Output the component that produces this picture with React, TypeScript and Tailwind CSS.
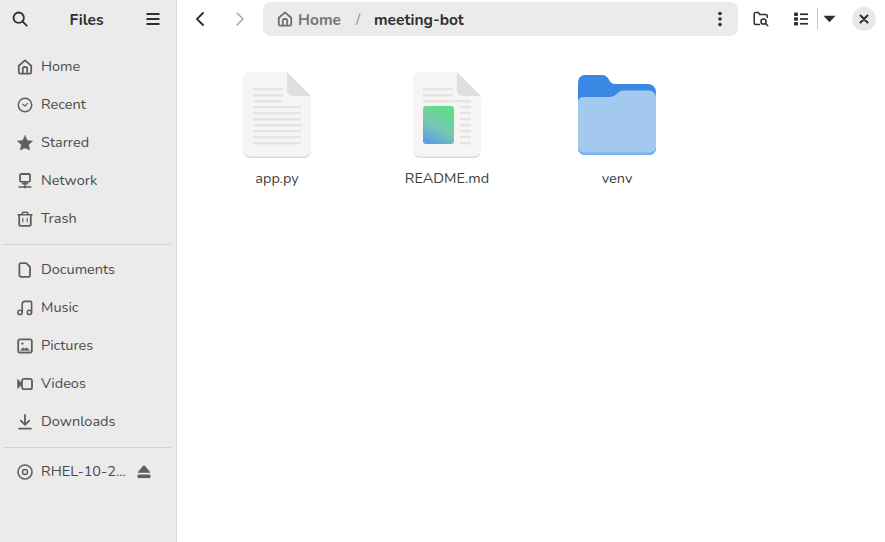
import type { ReactNode } from 'react';

const G = ({ children, className = 'text-[#5f5f5f]' }: { children: ReactNode; className?: string }) => (
  <svg viewBox="0 0 16 16" className={`w-4 h-4 shrink-0 ${className}`} fill="none" stroke="currentColor" strokeWidth="1.8" strokeLinecap="round" strokeLinejoin="round">
    {children}
  </svg>
);

const HomeIcon = ({ className }: { className?: string }) => (
  <G className={className}>
    <path d="M1.800 6.800 8 1.400l6.200 5.400v6.400a1.400 1.400 0 0 1-1.400 1.400H3.200a1.400 1.400 0 0 1-1.400-1.400z" />
    <path d="M5.800 14.400V9.600a1.600 1.600 0 0 1 1.600-1.600h1.200a1.600 1.600 0 0 1 1.600 1.600v4.800" />
  </G>
);

const places = [
  {
    name: 'Home',
    icon: <HomeIcon />,
  },
  {
    name: 'Recent',
    icon: (
      <G>
        <circle cx="8" cy="8" r="6.700" strokeWidth="1.500" />
        <path d="M5.600 7.200 8 9l2.600-2.600" strokeWidth="1.100" />
      </G>
    ),
  },
  {
    name: 'Starred',
    icon: (
      <G>
        <path d="M8 .4l2.300 5 5.300.6-3.900 3.700 1 5.400L8 12.900 3.300 15.100l1-5.400L.4 6l5.300-.6z" fill="currentColor" strokeWidth="0.400" />
      </G>
    ),
  },
  {
    name: 'Network',
    icon: (
      <G>
        <rect x="3" y="1" width="10" height="7.800" rx="1.200" />
        <path d="M5.500 10.800h5M8 9.500v4M2 14h12" strokeWidth="1.400" />
        <circle cx="8" cy="14" r="1.300" fill="currentColor" stroke="none" />
      </G>
    ),
  },
  {
    name: 'Trash',
    icon: (
      <G>
        <path d="M1 3.800h14M5.200 3.600V2.400a1.200 1.200 0 0 1 1.200-1.200h3.200a1.200 1.200 0 0 1 1.200 1.200v1.200" strokeWidth="1.500" />
        <path d="M2.200 3.800v9.400a1.600 1.600 0 0 0 1.600 1.600h8.400a1.600 1.600 0 0 0 1.600-1.600V3.800" />
        <path d="M5.800 7.400v3.600M10.200 7.400v3.600" strokeWidth="1.100" />
      </G>
    ),
  },
];

const folders = [
  {
    name: 'Documents',
    icon: (
      <G>
        <path d="M4 1.200h5.200l3.800 3.800v8.200a1.600 1.600 0 0 1-1.600 1.600H4a1.600 1.600 0 0 1-1.600-1.600V2.800A1.600 1.600 0 0 1 4 1.200z" />
      </G>
    ),
  },
  {
    name: 'Music',
    icon: (
      <G>
        <circle cx="3" cy="12.400" r="2.100" strokeWidth="1.600" />
        <circle cx="12.400" cy="12.400" r="2.100" strokeWidth="1.600" />
        <path d="M5.200 12.200V4.200a2.800 2.800 0 0 1 2.800-2.800h5.600a1 1 0 0 1 1 1v9.800" strokeWidth="1.600" />
      </G>
    ),
  },
  {
    name: 'Pictures',
    icon: (
      <G>
        <rect x="1.200" y="1.400" width="13.600" height="13.200" rx="1.800" />
        <circle cx="5.400" cy="5.600" r="1.200" fill="currentColor" stroke="none" />
        <path d="M3.200 12.600l3-3 1.600 1.500 1.600-1.700 3.400 3.200z" fill="currentColor" strokeWidth="0.400" />
      </G>
    ),
  },
  {
    name: 'Videos',
    icon: (
      <G>
        <rect x="5" y="2.800" width="10" height="10.400" rx="2" />
        <path d="M.6 3.600v8.800L4.400 8.900V7.100z" fill="currentColor" strokeWidth="0.600" />
      </G>
    ),
  },
  {
    name: 'Downloads',
    icon: (
      <G>
        <path d="M8 1v9.400M3.800 6.600 8 10.800l4.200-4.200M2 14.600h12" />
      </G>
    ),
  },
];

const Row = ({ name, icon, children }: { name: string; icon: ReactNode; children?: ReactNode }) => (
  <div className="flex items-center h-[38px] pl-[17px] pr-[25px]">
    {icon}
    <span className="ml-2 flex-1 text-[#4a4a4a]">{name}</span>
    {children}
  </div>
);

const PlainDoc = () => (
  <svg viewBox="0 0 68 86" className="w-[68px] h-[86px]">
    <path d="M6 0h38l24 26v53a6 6 0 0 1-6 6H6a6 6 0 0 1-6-6V6a6 6 0 0 1 6-6z" fill="#f6f5f4" />
    <path d="M0.500 79v1a6 6 0 0 0 6 6h55a6 6 0 0 0 6-6v-1a6 6 0 0 1-6 5.400H6.500a6 6 0 0 1-6-5.400z" fill="#dedddb" />
    <path d="M44 0l24 24H50a6 6 0 0 1-6-6z" fill="#e0dfdd" />
    {[16, 22, 28].map((y) => (
      <rect key={y} x="10" y={y} width="30" height="2.400" fill="#e5e4e2" />
    ))}
    {[34, 40, 46, 52, 58, 64, 70].map((y) => (
      <rect key={y} x="10" y={y} width="48" height="2.400" fill="#e5e4e2" />
    ))}
  </svg>
);

const ReadmeDoc = () => (
  <svg viewBox="0 0 68 86" className="w-[68px] h-[86px]">
    <defs>
      <linearGradient id="md" x1="0.700" y1="0.100" x2="0.250" y2="1">
        <stop offset="0" stopColor="#5fdc8d" />
        <stop offset="0.500" stopColor="#78c8b0" />
        <stop offset="1" stopColor="#5a9fe3" />
      </linearGradient>
    </defs>
    <path d="M6 0h38l24 26v53a6 6 0 0 1-6 6H6a6 6 0 0 1-6-6V6a6 6 0 0 1 6-6z" fill="#f6f5f4" />
    <path d="M0.500 79v1a6 6 0 0 0 6 6h55a6 6 0 0 0 6-6v-1a6 6 0 0 1-6 5.400H6.500a6 6 0 0 1-6-5.400z" fill="#dedddb" />
    <path d="M44 0l24 24H50a6 6 0 0 1-6-6z" fill="#e0dfdd" />
    {[16, 22].map((y) => (
      <rect key={y} x="10" y={y} width="30" height="2.400" fill="#e5e4e2" />
    ))}
    <rect x="10" y="28" width="48" height="2.400" fill="#e5e4e2" />
    {[34, 40, 46, 52, 58, 64, 70].map((y) => (
      <rect key={y} x="47" y={y} width="11" height="2.400" fill="#e5e4e2" />
    ))}
    <rect x="10" y="34" width="31" height="38" rx="3" fill="url(#md)" />
  </svg>
);

const FolderIcon = () => (
  <svg viewBox="0 0 78 80" className="w-[78px] h-[80px] mt-[3px]">
    <path d="M7 0h17c3 0 5 1.500 6.500 4 2 3.500 3.500 5 6.500 5h33a8 8 0 0 1 8 8v56a7 7 0 0 1-7 7H7a7 7 0 0 1-7-7V7a7 7 0 0 1 7-7z" fill="#3b87e4" />
    <rect x="0" y="50" width="78" height="30" rx="7" fill="#7dafe8" />
    <path d="M0 27a5 5 0 0 1 5-5h26c4 0 6-1.500 8-3.500 2-2 3.500-3 6.500-3H71a7 7 0 0 1 7 7v49a6 6 0 0 1-6 6H6a6 6 0 0 1-6-6z" fill="#a4c9ef" />
  </svg>
);

const files = [
  { name: 'app.py', icon: <PlainDoc /> },
  { name: 'README.md', icon: <ReadmeDoc /> },
  { name: 'venv', icon: <FolderIcon /> },
];

const Dark = ({ children }: { children: ReactNode }) => (
  <svg viewBox="0 0 16 16" className="w-4 h-4 text-[#2e2e2e]" fill="none" stroke="currentColor" strokeWidth="1.800" strokeLinecap="round" strokeLinejoin="round">
    {children}
  </svg>
);

const App = () => {
  return (
    <div className="flex h-[542px] w-[885px] overflow-hidden bg-white text-[14.5px] font-['Nunito','Open_Sans',sans-serif]">
      <aside className="w-[177px] shrink-0 bg-[#ebebeb] border-r border-[#d6d6d6]">
        <div className="flex items-center justify-between h-[38px] pl-3 pr-[15px]">
          <Dark>
            <circle cx="6.700" cy="6.700" r="5.200" />
            <path d="m10.700 10.700 4 4" />
          </Dark>
          <span className="font-bold text-[15.5px] text-[#2e2e2e] translate-y-px">Files</span>
          <Dark>
            <path d="M1.500 3h13M1.500 8h13M1.500 13h13" strokeLinecap="butt" />
          </Dark>
        </div>

        <nav className="pt-[10px]">
          {places.map((p) => (
            <Row key={p.name} name={p.name} icon={p.icon} />
          ))}
        </nav>
        <div className="ml-[3px] mr-[5px] mt-[6px] mb-[6px] h-px bg-[#d2d2d2]" />
        <nav>
          {folders.map((p) => (
            <Row key={p.name} name={p.name} icon={p.icon} />
          ))}
        </nav>
        <div className="ml-[3px] mr-[5px] mt-[6px] mb-[5px] h-px bg-[#d2d2d2]" />
        <Row
          name="RHEL-10-2..."
          icon={
            <G>
              <circle cx="8" cy="8" r="7" strokeWidth="1.600" />
              <circle cx="8" cy="8" r="2.500" strokeWidth="1.400" />
            </G>
          }
        >
          <svg viewBox="0 0 14 14" className="w-[14px] h-[14px] text-[#5f5f5f]" fill="currentColor">
            <path d="M7 .5c.5 0 1 .3 1.400.8L13 7a.5.5 0 0 1-.4.8H1.400A.5.5 0 0 1 1 7L5.600 1.300C6 .8 6.500.5 7 .5z" />
            <rect x="0.500" y="9.500" width="13" height="3.500" rx="1.200" />
          </svg>
        </Row>
      </aside>

      <main className="flex-1 min-w-0">
        <header className="flex items-center h-[38px] pl-[15px] pr-[9px]">
          <button className="w-4 flex justify-center">
            <Dark>
              <path d="M11 2 5 8l6 6" />
            </Dark>
          </button>
          <button className="w-4 ml-6 flex justify-center">
            <svg viewBox="0 0 16 16" className="w-4 h-4" fill="none" stroke="#a8a8a8" strokeWidth="1.500" strokeLinecap="round" strokeLinejoin="round">
              <path d="m5 2 6 6-6 6" />
            </svg>
          </button>
          <div className="ml-[15px] flex items-center w-[475px] h-[34px] rounded-lg bg-[#ebebeb] pl-[14px] pr-[10px]">
            <HomeIcon className="text-[#6f6f6f]" />
            <span className="ml-[5px] font-bold text-[15.5px] text-[#757575] translate-y-px">Home</span>
            <span className="ml-[15px] text-[#8a8a8a] translate-y-px">/</span>
            <span className="ml-[14px] font-bold text-[15.5px] text-[#2e2e2e] translate-y-px">meeting-bot</span>
            <span className="ml-auto">
              <svg viewBox="0 0 16 16" className="w-4 h-4 text-[#2e2e2e]" fill="currentColor">
                <circle cx="8" cy="2.500" r="1.800" />
                <circle cx="8" cy="8" r="1.800" />
                <circle cx="8" cy="13.500" r="1.800" />
              </svg>
            </span>
          </div>
          <span className="ml-[15px]">
            <Dark>
              <path d="M6.500 13.500H3A1.800 1.800 0 0 1 1.200 11.700V3A1.500 1.500 0 0 1 2.700 1.500h2.600l1.500 2h6A1.500 1.500 0 0 1 14.300 5v1.500" strokeWidth="1.500" />
              <circle cx="10.500" cy="10.500" r="2.600" strokeWidth="1.500" />
              <path d="m12.500 12.500 2.300 2.300" strokeWidth="1.500" />
            </Dark>
          </span>
          <span className="ml-6">
            <svg viewBox="0 0 16 16" className="w-4 h-4 text-[#2e2e2e]" fill="currentColor">
              <rect x="1" y="1.500" width="4" height="3.500" rx="1" />
              <rect x="1" y="6.250" width="4" height="3.500" rx="1" />
              <rect x="1" y="11" width="4" height="3.500" rx="1" />
              <rect x="7" y="2.400" width="8" height="1.700" />
              <rect x="7" y="7.150" width="8" height="1.700" />
              <rect x="7" y="11.900" width="8" height="1.700" />
            </svg>
          </span>
          <span className="ml-2 h-[22px] w-px bg-[#c8c8c8]" />
          <svg viewBox="0 0 14 8" className="ml-[5px] w-[13px] h-[8px] text-[#2e2e2e]" fill="currentColor">
            <path d="M.5.5h13L7 7.500z" />
          </svg>
          <button className="ml-[16px] w-6 h-6 rounded-full bg-[#e8e8e8] flex items-center justify-center">
            <svg viewBox="0 0 10 10" className="w-[10px] h-[10px]" fill="none" stroke="#2e2e2e" strokeWidth="2" strokeLinecap="round">
              <path d="m1.500 1.500 7 7M8.500 1.500l-7 7" />
            </svg>
          </button>
        </header>

        <section className="flex pl-[15px] pt-[34px]">
          {files.map((f) => (
            <div key={f.name} className="w-[170px] flex flex-col items-center">
              <div className="h-[86px] flex items-start justify-center">{f.icon}</div>
              <span className="mt-[10px] text-[#3d3d3d]">{f.name}</span>
            </div>
          ))}
        </section>
      </main>
    </div>
  );
};

export default App;
